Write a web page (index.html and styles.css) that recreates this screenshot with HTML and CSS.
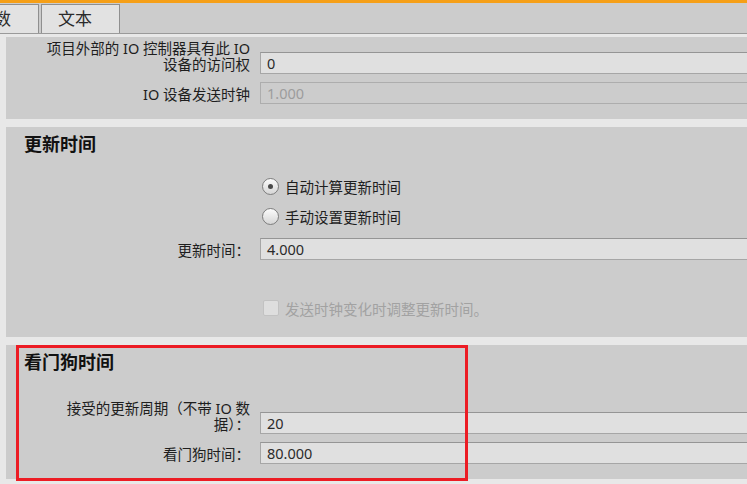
FILE: index.html
```html
<!DOCTYPE html>
<html lang="zh-CN">
<head>
    <meta charset="UTF-8">
    <meta name="viewport" content="width=device-width, initial-scale=1.0">
    <title>PROFINET 接口属性</title>
    <link rel="stylesheet" href="styles.css">
</head>
<body>
    <div class="tabbar">
        <div class="tab tab-first">参数</div>
        <div class="tab">文本</div>
    </div>

    <main class="content">
        <!-- 共享设备（上半部分已滚出视图） -->
        <section class="panel panel-shared">
            <div class="row">
                <div class="row-label">项目外部的 IO 控制器具有此 IO<br>设备的访问权</div>
                <div class="row-value"><div class="field">0</div></div>
            </div>
            <div class="row row-next">
                <div class="row-label">IO 设备发送时钟</div>
                <div class="row-value"><div class="field field-disabled">1.000</div></div>
            </div>
        </section>

        <section class="panel panel-update">
            <h2 class="panel-title">更新时间</h2>
            <div class="option option-first">
                <span class="radio radio-checked"></span>
                <span class="option-text">自动计算更新时间</span>
            </div>
            <div class="option">
                <span class="radio"></span>
                <span class="option-text">手动设置更新时间</span>
            </div>
            <div class="row row-update">
                <div class="row-label">更新时间：</div>
                <div class="row-value"><div class="field">4.000</div></div>
            </div>
            <div class="option option-check">
                <span class="checkbox"></span>
                <span class="option-text option-disabled">发送时钟变化时调整更新时间。</span>
            </div>
        </section>

        <section class="panel panel-watchdog">
            <h2 class="panel-title">看门狗时间</h2>
            <div class="row row-first">
                <div class="row-label">接受的更新周期（不带 IO 数<br>据）：</div>
                <div class="row-value"><div class="field">20</div></div>
            </div>
            <div class="row row-next">
                <div class="row-label">看门狗时间：</div>
                <div class="row-value"><div class="field">80.000</div></div>
            </div>
            <div class="highlight"></div>
        </section>
    </main>
</body>
</html>
```

FILE: styles.css
```css
body {
    margin: 0;
    padding: 0;
    background: #e8e8e8;
    color: #1e1e1e;
    font-family: 'Noto Sans', 'Noto Sans CJK SC', sans-serif;
    font-size: 14.5px;
    overflow: hidden;
    height: 484px;
}

.tabbar {
    display: flex;
    gap: 2px;
    height: 29px;
    background: #cccccc;
    border-top: 3px solid #f59f17;
    border-bottom: 1px solid #9a9a9a;
    padding-top: 1px;
    box-sizing: content-box;
}

.tab {
    padding: 0 27px 0 16px;
    background: #e2e2e2;
    border: 1px solid #8f8f8f;
    border-bottom: none;
    font-size: 17px;
    line-height: 28px;
    color: #2a2a2a;
}

.tab-first {
    margin-left: -40px;
}

.content {
    padding: 3px 0 0 6px;
    margin-right: -20px;
}

.panel {
    background: #cccccc;
    padding: 0 0 15px 18px;
    margin-bottom: 8px;
    position: relative;
}

.panel-shared {
    padding-top: 3px;
}

.panel-update {
    padding-top: 5px;
    padding-bottom: 14px;
}

.panel-watchdog {
    padding-top: 5px;
}

.panel-title {
    margin: 0;
    font-size: 18px;
    line-height: 24px;
    font-weight: bold;
    color: #111;
}

.row {
    display: flex;
    align-items: flex-end;
}

.row-next {
    margin-top: 8px;
}

.row-first {
    margin-top: 26px;
}

.row-update {
    margin-top: 7px;
}

.row-label {
    width: 226px;
    flex-shrink: 0;
    text-align: right;
    line-height: 16px;
    padding-bottom: 2px;
}

.row-value {
    flex: 1;
    margin-left: 10px;
}

.field {
    height: 20px;
    line-height: 20px;
    padding-left: 6px;
    background: #e0e0e0;
    border: 1px solid #a6a6a6;
    border-top-color: #959595;
    color: #2b2b2b;
}

.field-disabled {
    background: #cccccc;
    border-color: #adadad;
    color: #9c9c9c;
}

.option {
    display: flex;
    align-items: center;
    height: 30px;
    margin-left: 237px;
}

.option-first {
    margin-top: 15px;
}

.option-check {
    margin-top: 33px;
}

.option-text {
    margin-left: 6px;
}

.option-disabled {
    color: #a2a2a2;
}

.radio {
    width: 15px;
    height: 15px;
    margin-left: 1px;
    border: 1px solid #7d7d7d;
    border-radius: 50%;
    background: linear-gradient(180deg, #fbfbfb, #d6d6d6);
    position: relative;
}

.radio-checked::after {
    content: '';
    position: absolute;
    left: 5px;
    top: 5px;
    width: 5px;
    height: 5px;
    border-radius: 50%;
    background: #4a4a4a;
}

.checkbox {
    width: 14px;
    height: 14px;
    margin-left: 2px;
    border: 1px solid #c2c2c2;
    border-radius: 2px;
    background: #dedede;
}

.highlight {
    position: absolute;
    left: 10px;
    top: 0;
    width: 452px;
    height: 136px;
    border: 3px solid #ec1c24;
    box-sizing: border-box;
}
```
